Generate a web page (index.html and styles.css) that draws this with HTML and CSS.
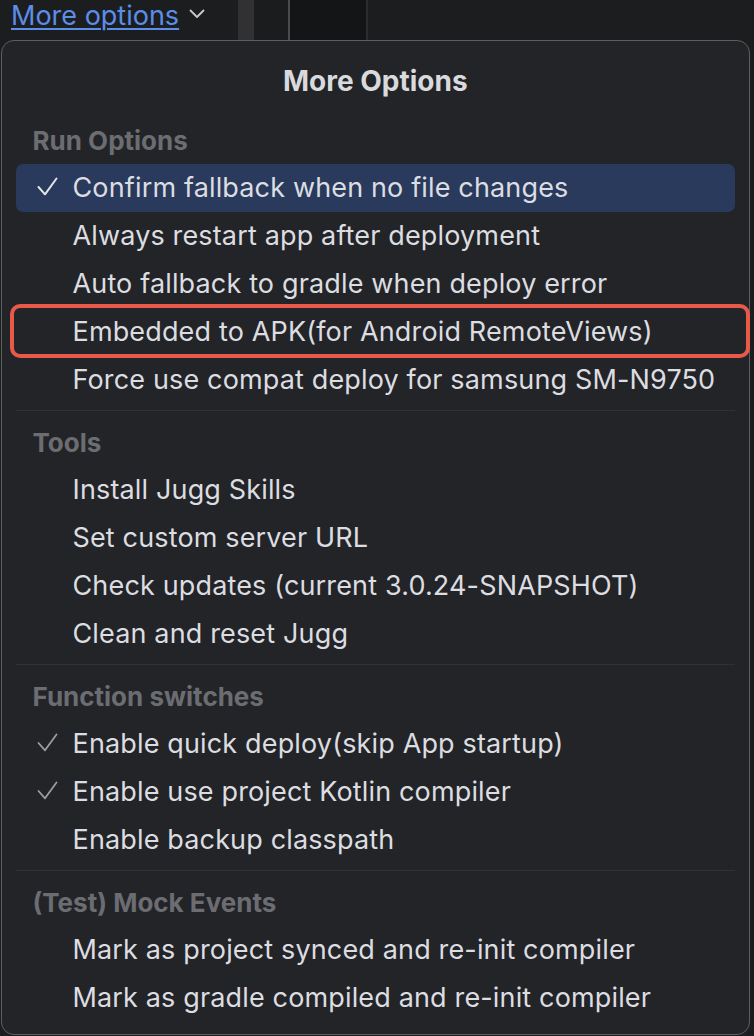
FILE: index.html
```html
<!DOCTYPE html>
<html lang="en">
<head>
<meta charset="utf-8">
<title>More Options</title>
<link rel="stylesheet" href="styles.css">
</head>
<body>
<div class="topbar">
  <div class="link-group">
    <a class="link" href="#">More options</a>
    <svg class="chevron" width="16" height="10" viewBox="0 0 16 10"><polyline points="1.5,1.5 8,8 14.5,1.5" fill="none" stroke="#c9cacd" stroke-width="1.8" stroke-linecap="round" stroke-linejoin="round"/></svg>
  </div>
  <div class="strip"></div>
  <div class="gap"></div>
  <div class="vline light"></div>
  <div class="pane"></div>
  <div class="vline dark"></div>
  <div class="rest"></div>
</div>

<div class="menu">
  <div class="title">More Options</div>

  <section class="group first">
    <div class="group-label">Run Options</div>
    <div class="item selected">
      <span class="check"><svg width="21" height="19" viewBox="0 0 21 19"><polyline points="1.5,10 8,17.3 19.5,1.5" fill="none" stroke="currentColor" stroke-width="2" stroke-linecap="round" stroke-linejoin="round"/></svg></span>
      <span class="label">Confirm fallback when no file changes</span>
    </div>
    <div class="item"><span class="check"></span><span class="label">Always restart app after deployment</span></div>
    <div class="item"><span class="check"></span><span class="label">Auto fallback to gradle when deploy error</span></div>
    <div class="item marked"><span class="check"></span><span class="label">Embedded to APK(for Android RemoteViews)</span><span class="annotation"></span></div>
    <div class="item"><span class="check"></span><span class="label">Force use compat deploy for samsung SM-N9750</span></div>
  </section>

  <section class="group">
    <div class="group-label">Tools</div>
    <div class="item"><span class="check"></span><span class="label">Install Jugg Skills</span></div>
    <div class="item"><span class="check"></span><span class="label">Set custom server URL</span></div>
    <div class="item"><span class="check"></span><span class="label">Check updates (current 3.0.24-SNAPSHOT)</span></div>
    <div class="item"><span class="check"></span><span class="label">Clean and reset Jugg</span></div>
  </section>

  <section class="group">
    <div class="group-label">Function switches</div>
    <div class="item">
      <span class="check dim"><svg width="21" height="19" viewBox="0 0 21 19"><polyline points="1.5,10 8,17.3 19.5,1.5" fill="none" stroke="currentColor" stroke-width="1.8" stroke-linecap="round" stroke-linejoin="round"/></svg></span>
      <span class="label">Enable quick deploy(skip App startup)</span>
    </div>
    <div class="item">
      <span class="check dim"><svg width="21" height="19" viewBox="0 0 21 19"><polyline points="1.5,10 8,17.3 19.5,1.5" fill="none" stroke="currentColor" stroke-width="1.8" stroke-linecap="round" stroke-linejoin="round"/></svg></span>
      <span class="label">Enable use project Kotlin compiler</span>
    </div>
    <div class="item"><span class="check"></span><span class="label">Enable backup classpath</span></div>
  </section>

  <section class="group last">
    <div class="group-label">(Test) Mock Events</div>
    <div class="item"><span class="check"></span><span class="label">Mark as project synced and re-init compiler</span></div>
    <div class="item"><span class="check"></span><span class="label">Mark as gradle compiled and re-init compiler</span></div>
  </section>
</div>
</body>
</html>
```

FILE: styles.css
```css
html, body {
  margin: 0;
  padding: 0;
}

body {
  width: 754px;
  height: 1036px;
  overflow: hidden;
  background: #1c1d1f;
  font-family: Inter, "Noto Sans", "Liberation Sans", sans-serif;
  color: #dcdde1;
}

/* ---------- top bar ---------- */
.topbar {
  display: flex;
  height: 40px;
  background: #1c1d1f;
}

.link-group {
  width: 227px;
  padding-left: 11px;
  display: flex;
  align-items: flex-start;
  gap: 10px;
}

.link {
  font-size: 27px;
  line-height: 32px;
  color: #5b8ee8;
  text-decoration: underline;
  text-decoration-thickness: 2px;
  text-underline-offset: 3px;
  margin-top: 0;
  white-space: nowrap;
}

.chevron {
  margin-top: 9px;
  flex: none;
}

.strip {
  width: 16px;
  background: #313133;
}

.gap {
  width: 34px;
  background: #1b1c1e;
}

.vline {
  width: 2px;
}

.vline.light { background: #4a4b4d; }
.vline.dark { background: #2b2c2e; }

.pane {
  width: 76px;
  background: #141517;
}

.rest {
  flex: 1;
  background: #1c1d1f;
}

/* ---------- menu card ---------- */
.menu {
  margin: 0 4px 0 1px;
  height: 995px;
  box-sizing: border-box;
  border: 1.5px solid #5d5e61;
  border-radius: 13px;
  background: #232427;
  padding: 20px 14px 0 13.5px;
}

.title {
  text-align: center;
  font-size: 28px;
  font-weight: 700;
  line-height: 40px;
  color: #d9dadd;
  margin-bottom: 21.5px;
}

.group {
  padding: 14px 0 6px;
  border-top: 1px solid #303134;
}

.group.first {
  padding-top: 0;
  border-top: none;
}

.group.last {
  padding-bottom: 0;
}

.group-label {
  font-size: 26px;
  font-weight: 700;
  line-height: 36px;
  color: #6c6d72;
  padding-left: 17px;
  margin-bottom: 5px;
}

.item {
  position: relative;
  display: flex;
  align-items: center;
  height: 48px;
  padding-left: 21px;
  gap: 15px;
  font-size: 27px;
  letter-spacing: 0.15px;
  color: #dcdde1;
  border-radius: 7px;
}

.item.selected {
  background: #293a5d;
}

.check {
  width: 21px;
  height: 19px;
  display: flex;
  color: #e4e5e9;
  margin-top: -2px;
}

.check.dim {
  color: #9c9da2;
}

.label {
  white-space: nowrap;
}

/* red annotation frame drawn over the item */
.annotation {
  position: absolute;
  top: -4px;
  bottom: -2px;
  left: -6px;
  right: -15px;
  border: 4px solid #e8594a;
  border-radius: 10px;
  pointer-events: none;
}
```
